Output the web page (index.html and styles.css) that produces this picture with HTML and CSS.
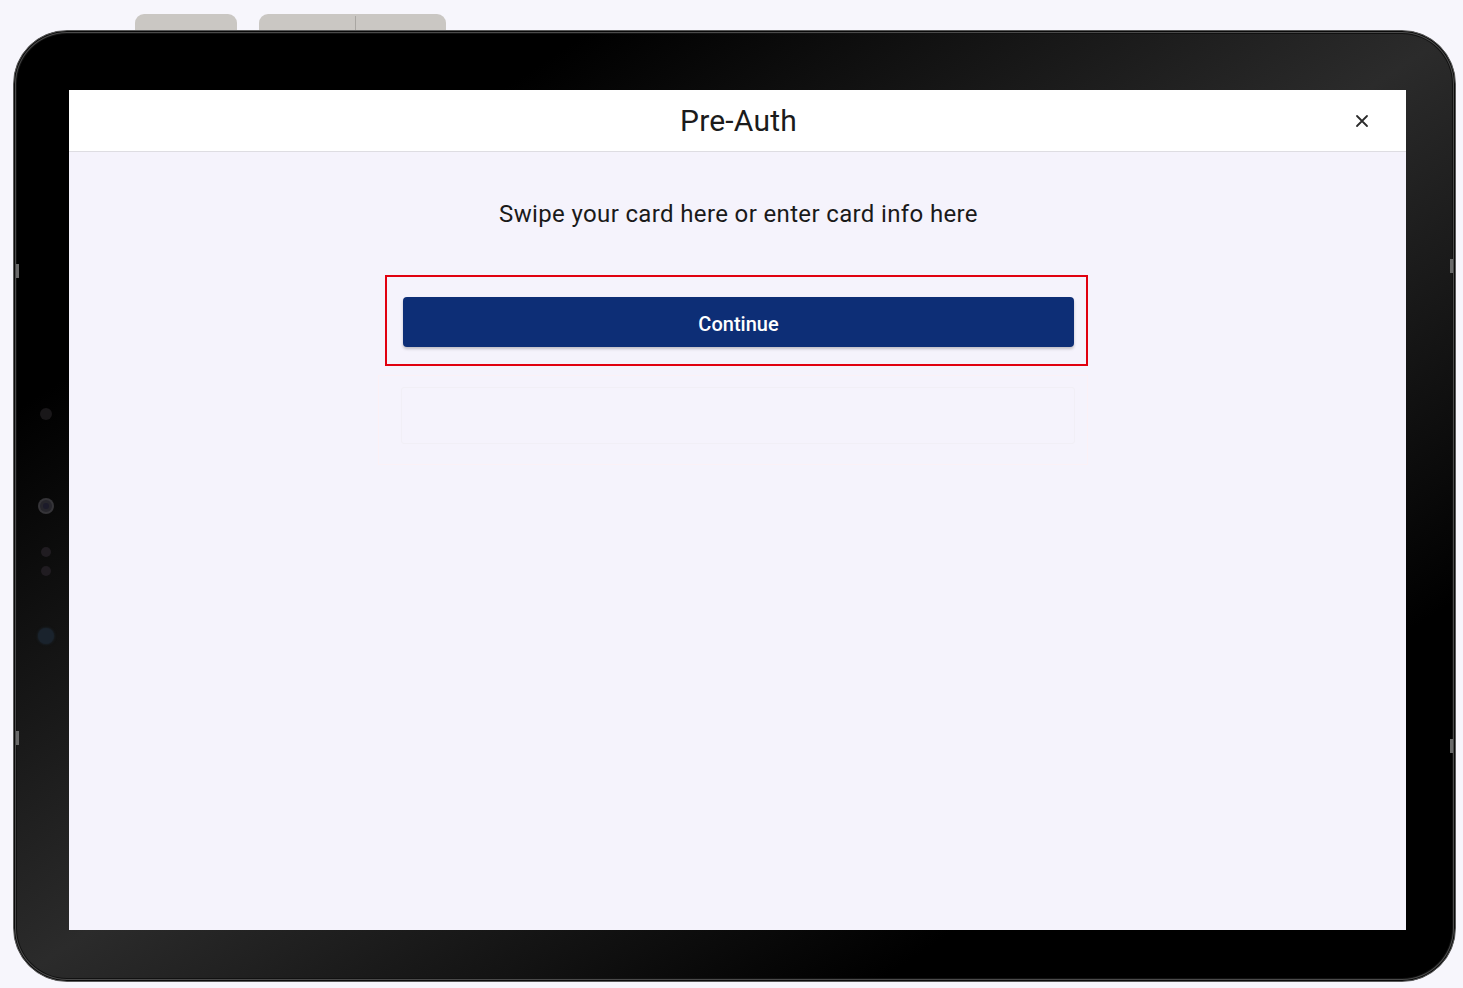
FILE: index.html
```html
<!DOCTYPE html>
<html lang="en">
<head>
<meta charset="utf-8">
<title>Pre-Auth</title>
<link rel="stylesheet" href="styles.css">
</head>
<body>
<div class="page">
  <div class="hw-buttons">
    <div class="hw-btn hw-power"></div>
    <div class="hw-btn hw-volume"><span class="hw-split"></span></div>
  </div>
  <div class="device">
    <span class="side-bump bump-l1"></span>
    <span class="side-bump bump-l2"></span>
    <span class="side-bump bump-r1"></span>
    <span class="side-bump bump-r2"></span>
    <span class="sensor s1"></span>
    <span class="sensor cam"></span>
    <span class="sensor s3"></span>
    <span class="sensor s4"></span>
    <span class="sensor s5"></span>
    <div class="screen">
      <header class="modal-header">
        <h1 class="modal-title">Pre-Auth</h1>
        <button class="close-btn" aria-label="Close">
          <svg width="14" height="14" viewBox="0 0 14 14"><path d="M2 2 L12 12 M12 2 L2 12" stroke="#2b2b2b" stroke-width="1.8" stroke-linecap="round"/></svg>
        </button>
      </header>
      <main class="modal-body">
        <p class="prompt">Swipe your card here or enter card info here</p>
        <div class="highlight-box">
          <button class="continue-btn">Continue</button>
        </div>
        <div class="ghost-box">
          <div class="ghost-inner"></div>
        </div>
      </main>
    </div>
  </div>
</div>
</body>
</html>
```

FILE: styles.css
```css
* { box-sizing: border-box; }

html, body {
  margin: 0;
  padding: 0;
  background: #f7f6fc;
  font-family: Roboto, "Liberation Sans", Arial, sans-serif;
}

.page {
  width: 1463px;
  height: 988px;
  padding-top: 14px;
  overflow: hidden;
}

.hw-buttons {
  display: flex;
  gap: 22px;
  margin-left: 135px;
  height: 16px;
}

.hw-btn {
  height: 16px;
  background: #cac7c3;
  border-radius: 9px 9px 0 0;
  position: relative;
}

.hw-power { width: 102px; }
.hw-volume { width: 187px; }

.hw-split {
  position: absolute;
  left: 96px;
  top: 2px;
  bottom: 0;
  width: 1px;
  background: #a9a6a2;
}

.device {
  position: relative;
  margin-left: 13px;
  width: 1443px;
  height: 952px;
  border-radius: 54px;
  background: linear-gradient(to bottom right, #000 0%, #000 20%, #2b2b2b 50%, #000 80%, #000 100%);
  border: 1px solid #5a5a5a;
  box-shadow: inset 0 0 0 1px #0a0a0a, inset 0 0 0 2px #4a4a4a, inset 0 0 0 3px #111;
  padding: 59px 49px 51px 55px;
}

.side-bump {
  position: absolute;
  width: 3px;
  height: 14px;
  background: #6a6a6a;
}
.bump-l1 { left: 2px; top: 233px; }
.bump-l2 { left: 2px; top: 700px; }
.bump-r1 { right: 2px; top: 228px; }
.bump-r2 { right: 2px; top: 708px; }

.sensor {
  position: absolute;
  border-radius: 50%;
}
.s1 { left: 26px; top: 377px; width: 12px; height: 12px; background: #191719; }
.cam { left: 26px; top: 469px; width: 12px; height: 12px; background: #26252b; box-shadow: 0 0 0 2px #353438; }
.cam::after { content: ""; position: absolute; left: 3px; top: 3px; width: 6px; height: 6px; border-radius: 50%; background: #1c1b2a; }
.s3 { left: 27px; top: 516px; width: 10px; height: 10px; background: #201c21; }
.s4 { left: 27px; top: 535px; width: 10px; height: 10px; background: #201c21; }
.s5 { left: 24px; top: 597px; width: 16px; height: 16px; background: #1a232d; box-shadow: 0 0 3px #1f2b36; }

.screen {
  width: 1337px;
  height: 840px;
  background: #f5f3fc;
  display: flex;
  flex-direction: column;
}

.modal-header {
  position: relative;
  height: 62px;
  background: #fff;
  border-bottom: 1px solid #dedde2;
  display: flex;
  align-items: center;
  justify-content: center;
  flex-shrink: 0;
}

.modal-title {
  margin: 0;
  font-size: 30px;
  font-weight: 400;
  color: #1b1b1b;
  letter-spacing: 0.2px;
  transform: translateX(1px);
}

.close-btn {
  position: absolute;
  right: 37px;
  top: 24px;
  width: 14px;
  height: 14px;
  padding: 0;
  border: 0;
  background: none;
  display: flex;
}

.modal-body {
  display: flex;
  flex-direction: column;
  align-items: center;
  padding-top: 47px;
}

.prompt {
  margin: 0;
  font-size: 24px;
  font-weight: 400;
  line-height: 30px;
  letter-spacing: 0.36px;
  color: #1a1a1a;
  transform: translateX(1px);
}

.highlight-box {
  margin-top: 46px;
  width: 703px;
  height: 91px;
  border: 2px solid #e1000f;
  padding: 20px 12px 17px 16px;
  display: flex;
  transform: translateX(-1px);
}

.continue-btn {
  flex: 1;
  height: 50px;
  border: 0;
  border-radius: 4px;
  background: #0d2e76;
  color: #fff;
  font-family: Roboto, "Liberation Sans", Arial, sans-serif;
  font-size: 20px;
  font-weight: 500;
  padding: 4px 0 0;
  box-shadow: 0 2px 3px rgba(0, 0, 0, 0.22);
}

.ghost-box {
  margin-top: 9px;
  width: 710px;
  height: 90px;
  border: 1px solid #fbf1f6;
  padding: 11px 12px 20px 22px;
  transform: translateX(-5px);
}

.ghost-inner {
  height: 100%;
  border: 1px solid #f1eff6;
  border-radius: 3px;
}
```
